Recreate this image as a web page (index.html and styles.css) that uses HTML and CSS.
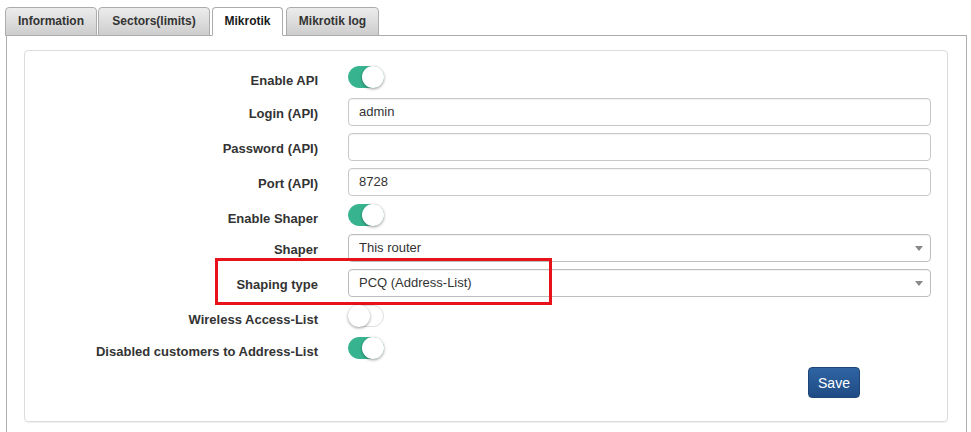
FILE: index.html
```html
<!DOCTYPE html>
<html>
<head>
<meta charset="utf-8">
<link rel="stylesheet" href="styles.css">
</head>
<body>
<div class="tabs">
  <div class="tab">Information</div>
  <div class="tab">Sectors(limits)</div>
  <div class="tab active">Mikrotik</div>
  <div class="tab">Mikrotik log</div>
</div>
<div class="content">
  <div class="panel">
    <div class="row toggle-row first">
      <div class="label">Enable API</div>
      <div class="control"><span class="switch on"><span class="knob"></span></span></div>
    </div>
    <div class="row">
      <div class="label">Login (API)</div>
      <div class="control"><div class="input">admin</div></div>
    </div>
    <div class="row">
      <div class="label">Password (API)</div>
      <div class="control"><div class="input"></div></div>
    </div>
    <div class="row">
      <div class="label">Port (API)</div>
      <div class="control"><div class="input">8728</div></div>
    </div>
    <div class="row toggle-row">
      <div class="label">Enable Shaper</div>
      <div class="control"><span class="switch on"><span class="knob"></span></span></div>
    </div>
    <div class="row">
      <div class="label">Shaper</div>
      <div class="control"><div class="input select"><span>This router</span><span class="arrow"></span></div></div>
    </div>
    <div class="row highlighted">
      <div class="label">Shaping type</div>
      <div class="control"><div class="input select"><span>PCQ (Address-List)</span><span class="arrow"></span></div></div>
      <div class="redbox"></div>
    </div>
    <div class="row toggle-row">
      <div class="label">Wireless Access-List</div>
      <div class="control"><span class="switch"><span class="knob"></span></span></div>
    </div>
    <div class="row toggle-row">
      <div class="label">Disabled customers to Address-List</div>
      <div class="control"><span class="switch on"><span class="knob"></span></span></div>
    </div>
    <div class="actions">
      <button class="btn">Save</button>
    </div>
  </div>
</div>
</body>
</html>
```
FILE: styles.css
```css
html, body {
  margin: 0;
  padding: 0;
  background: #fff;
  font-family: "Liberation Sans", Arial, Helvetica, sans-serif;
  color: #333;
}

.tabs {
  display: flex;
  padding: 7px 0 0 5px;
  margin-bottom: -1px;
  position: relative;
  z-index: 1;
}

.tab {
  box-sizing: border-box;
  height: 29px;
  padding: 0;
  text-align: center;
  white-space: nowrap;
  border: 1px solid #acacac;
  border-radius: 4px 4px 0 0;
  background: linear-gradient(#ececec, #cdcdcd);
  font-size: 12px;
  font-weight: bold;
  line-height: 27px;
  color: #333;
}

.tab:nth-child(1) { width: 92px; }
.tab:nth-child(2) { width: 112px; margin-left: 1px; }
.tab:nth-child(3) { width: 71px; margin-left: 2px; }
.tab:nth-child(4) { width: 93px; margin-left: 3px; }

.tab.active {
  background: #fff;
  border-bottom-color: #fff;
  color: #1a1a1a;
}

.content {
  margin-left: 6px;
  width: 961px;
  box-sizing: border-box;
  border: 1px solid #acacac;
  border-bottom: none;
  padding: 14px 18px 10px 17px;
}

.panel {
  box-sizing: border-box;
  height: 372px;
  border: 1px solid #dcdcdc;
  border-radius: 4px;
  box-shadow: 0 1px 1px rgba(0,0,0,.06);
  padding: 14px 15px 0 0;
}

.row {
  display: grid;
  grid-template-columns: 293px 583px;
  column-gap: 30px;
  margin-bottom: 7px;
  position: relative;
}

.toggle-row {
  margin-bottom: 6px;
}

.toggle-row.first {
  margin-bottom: 7px;
}

.label {
  text-align: right;
  font-size: 13px;
  font-weight: bold;
  line-height: 18.57px;
  padding-top: 7px;
  color: #333;
}

.control {
  display: flex;
  align-items: flex-start;
}

.input {
  box-sizing: border-box;
  width: 584px;
  height: 28px;
  border: 1px solid #c8c8c8;
  border-radius: 4px;
  box-shadow: inset 0 1px 1px rgba(0,0,0,.05);
  padding: 0 10px;
  font-size: 13px;
  line-height: 26px;
  color: #333;
}

.select {
  display: flex;
  justify-content: space-between;
  align-items: center;
  padding-right: 7px;
  border-color: #bdbdbd;
}

.arrow {
  width: 0;
  height: 0;
  border-left: 4px solid transparent;
  border-right: 4px solid transparent;
  border-top: 5px solid #888;
}

.switch {
  box-sizing: border-box;
  display: flex;
  justify-content: flex-start;
  width: 36px;
  height: 22px;
  border-radius: 11px;
  border: 1px solid #dfdfdf;
  background: #fff;
  margin-top: 1px;
}

.switch.on {
  background: #37b48f;
  border-color: #37b48f;
  justify-content: flex-end;
}

.knob {
  box-sizing: border-box;
  width: 22px;
  height: 22px;
  margin: -1px;
  border-radius: 50%;
  background: #fff;
  box-shadow: 0 1px 3px rgba(0,0,0,.4);
}

.redbox {
  position: absolute;
  left: 190px;
  top: -11px;
  width: 337px;
  height: 47px;
  box-sizing: border-box;
  border: 3px solid #e8121b;
  pointer-events: none;
}

.actions {
  display: flex;
  justify-content: flex-end;
  padding-right: 72px;
  margin-top: 0;
}

.btn {
  box-sizing: border-box;
  width: 52px;
  height: 31px;
  border: 1px solid #1d4577;
  border-radius: 4px;
  background: linear-gradient(#2f64a4, #1f4b84);
  color: #fff;
  font-family: "Liberation Sans", Arial, sans-serif;
  font-size: 14px;
  padding: 0;
}
```
